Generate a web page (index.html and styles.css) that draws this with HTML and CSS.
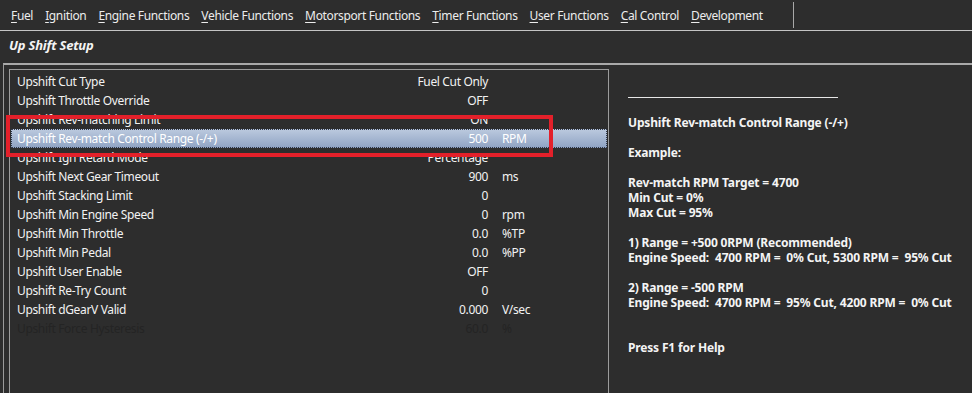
FILE: index.html
```html
<!DOCTYPE html>
<html lang="en">

<head>
    <meta charset="UTF-8">
    <title>Up Shift Setup</title>
    <link rel="stylesheet" href="styles.css">
</head>

<body>
    <div class="menubar">
        <span class="menu-item"><u>F</u>uel</span>
        <span class="menu-item"><u>I</u>gnition</span>
        <span class="menu-item"><u>E</u>ngine Functions</span>
        <span class="menu-item"><u>V</u>ehicle Functions</span>
        <span class="menu-item"><u>M</u>otorsport Functions</span>
        <span class="menu-item"><u>T</u>imer Functions</span>
        <span class="menu-item"><u>U</u>ser Functions</span>
        <span class="menu-item"><u>C</u>al Control</span>
        <span class="menu-item"><u>D</u>evelopment</span>
        <span class="menu-sep"></span>
    </div>

    <div class="page-title">Up Shift Setup</div>

    <div class="frame">
        <div class="param-list">
            <div class="row"><span>Upshift Cut Type</span><span class="val">Fuel Cut Only</span><span class="unit"></span></div>
            <div class="row"><span>Upshift Throttle Override</span><span class="val">OFF</span><span class="unit"></span></div>
            <div class="row"><span>Upshift Rev-matching Limit</span><span class="val">ON</span><span class="unit"></span></div>
            <div class="row selected"><span>Upshift Rev-match Control Range (-/+)</span><span class="val">500</span><span class="unit">RPM</span></div>
            <div class="row"><span>Upshift Ign Retard Mode</span><span class="val">Percentage</span><span class="unit"></span></div>
            <div class="row"><span>Upshift Next Gear Timeout</span><span class="val">900</span><span class="unit">ms</span></div>
            <div class="row"><span>Upshift Stacking Limit</span><span class="val">0</span><span class="unit"></span></div>
            <div class="row"><span>Upshift Min Engine Speed</span><span class="val">0</span><span class="unit">rpm</span></div>
            <div class="row"><span>Upshift Min Throttle</span><span class="val">0.0</span><span class="unit">%TP</span></div>
            <div class="row"><span>Upshift Min Pedal</span><span class="val">0.0</span><span class="unit">%PP</span></div>
            <div class="row"><span>Upshift User Enable</span><span class="val">OFF</span><span class="unit"></span></div>
            <div class="row"><span>Upshift Re-Try Count</span><span class="val">0</span><span class="unit"></span></div>
            <div class="row"><span>Upshift dGearV Valid</span><span class="val">0.000</span><span class="unit">V/sec</span></div>
            <div class="row disabled"><span>Upshift Force Hysteresis</span><span class="val">60.0</span><span class="unit">%</span></div>

            <div class="highlight"></div>
        </div>

        <div class="help">
            <div class="help-rule"></div>
            <p class="help-text">Upshift Rev-match Control Range (-/+)

Example:

Rev-match RPM Target = 4700
Min Cut = 0%
Max Cut = 95%

1) Range = +500 0RPM (Recommended)
Engine Speed:&nbsp; 4700 RPM =&nbsp; 0% Cut, 5300 RPM =&nbsp; 95% Cut

2) Range = -500 RPM
Engine Speed:&nbsp; 4700 RPM =&nbsp; 95% Cut, 4200 RPM =&nbsp; 0% Cut


Press F1 for Help</p>
        </div>
    </div>
</body>

</html>
```

FILE: styles.css
```css
body {
    font-family: 'Noto Sans', 'Open Sans', sans-serif;
    font-size: 12px;
    letter-spacing: -0.35px;
    background-color: #2d2d2d;
    color: #f2f2f2;
    margin: 0;
    overflow: hidden;
}

.menubar {
    display: flex;
    align-items: center;
    height: 30px;
    padding-left: 5px;
    border-bottom: 1px solid #c4c4c4;
    color: #ececec;
}

.menu-item {
    padding: 0 6px;
}

.menu-item u {
    text-underline-offset: 2px;
}

.menu-sep {
    width: 1px;
    height: 26px;
    margin-left: 24px;
    background-color: #a8a8a8;
}

.page-title {
    height: 32px;
    line-height: 28px;
    padding-left: 9px;
    font-size: 13px;
    font-weight: bold;
    font-style: italic;
    letter-spacing: -0.2px;
    color: #f4f4f4;
}

.frame {
    display: flex;
    margin-left: 3px;
    padding: 4px 0 0 5px;
    border-top: 2px solid #a9a9a9;
    border-left: 1px solid #9a9a9a;
    height: 324px;
    overflow: hidden;
}

.param-list {
    position: relative;
    box-sizing: border-box;
    width: 600px;
    height: 340px;
    padding: 2px 1px 0 1px;
    border: 1px solid #9c9c9c;
    border-bottom: none;
}

.row {
    display: grid;
    grid-template-columns: 1fr 130px 119px;
    height: 19px;
    line-height: 19px;
    padding-left: 6px;
    white-space: nowrap;
}

.row .val {
    text-align: right;
}

.row .unit {
    padding-left: 14px;
}

.row.selected {
    background: linear-gradient(#bccadf, #8fa3c3);
    outline: 1px dotted #30384a;
    outline-offset: -1px;
    color: #ffffff;
}

.row.disabled {
    color: #242424;
}

.highlight {
    position: absolute;
    left: -4px;
    top: 45px;
    width: 547px;
    height: 42px;
    box-sizing: border-box;
    border: 4px solid #e3202a;
}

.help {
    padding: 28px 0 0 19px;
}

.help-rule {
    width: 210px;
    border-top: 1px solid #e6e6e6;
    margin-bottom: 17px;
}

.help-text {
    margin: 0;
    white-space: pre-line;
    line-height: 15px;
    font-weight: bold;
    letter-spacing: -0.17px;
    color: #f4f4f4;
}
```
